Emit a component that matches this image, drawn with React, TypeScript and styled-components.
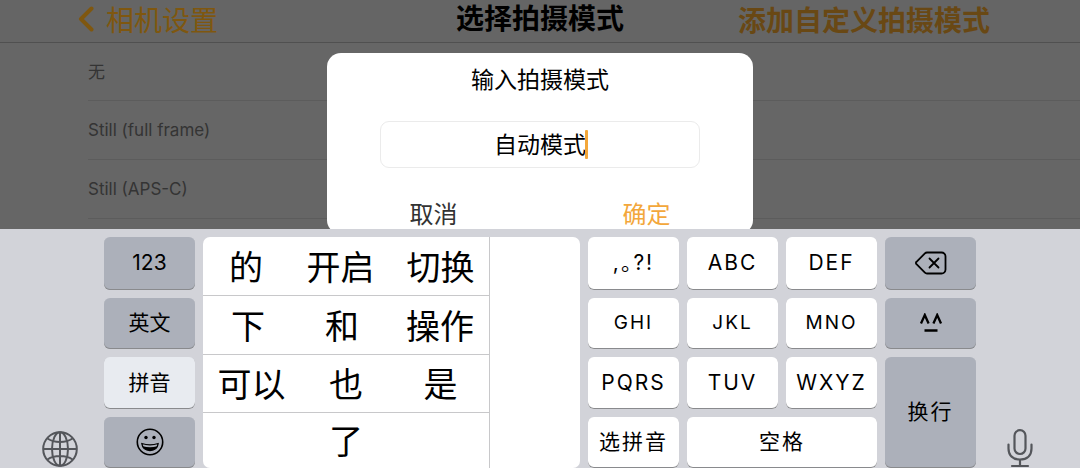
import React from 'react';
import styled, { createGlobalStyle } from 'styled-components';

const GlobalStyle = createGlobalStyle`
  *, *::before, *::after { box-sizing: border-box; }
  body {
    margin: 0;
    background: #d2d3d9;
    font-family: Inter, "Noto Sans CJK SC", sans-serif;
    color: #000;
  }
  button, input { font: inherit; color: inherit; }
  button { border: 0; padding: 0; background: none; cursor: pointer; }
`;

const Page = styled.div`
  display: flex;
  flex-direction: column;
  height: 100vh;
`;

const Screen = styled.main`
  position: relative;
  flex: 1;
  min-height: 0;
  overflow: hidden;
  background: #666;
`;

const Header = styled.header`
  display: grid;
  grid-template-columns: 1fr auto 1fr;
  align-items: center;
  height: 43px;
  padding: 0 90px;
  background: #656565;
  border-bottom: 1px solid #505050;
  font-size: 28px;
  line-height: 40px;
`;

const BackLink = styled.a`
  display: flex;
  align-items: center;
  gap: 12px;
  margin-left: -12px;
  color: #7f570f;
  text-decoration: none;

  svg { margin-bottom: 4px; }
`;

const Title = styled.h1`
  margin: 0;
  padding-bottom: 4px;
  font-size: 28px;
  line-height: 36px;
  font-weight: 600;
`;

const AddButton = styled.button`
  justify-self: end;
  color: #694814;
  font-weight: 600;
`;

const List = styled.ul`
  list-style: none;
  margin: 0;
  padding: 0 0 0 88px;
`;

const Row = styled.li`
  height: 59px;
  border-bottom: 1px solid #5c5c5c;
  color: #343434;
  font-size: 17px;
  line-height: 59px;

  &:first-child { height: 58px; }
`;

const Dialog = styled.form`
  position: absolute;
  top: 53px;
  left: 50%;
  width: 426px;
  transform: translateX(-50%);
  padding: 10px 0 2px;
  border-radius: 14px;
  background: #fff;
  font-size: 23px;
  line-height: 34px;
  text-align: center;
`;

const DialogLabel = styled.label`
  display: block;
`;

const Field = styled.div`
  position: relative;
  margin: 24px 53px 0;
`;

const NameInput = styled.input`
  display: block;
  width: 100%;
  height: 47px;
  padding: 0 0 4px;
  border: 1px solid #ebebeb;
  border-radius: 9px;
  background: #fff;
  text-align: center;
  outline: none;
`;

const Caret = styled.span`
  position: absolute;
  top: 9px;
  left: calc(50% + 45px);
  width: 3px;
  height: 29px;
  border-radius: 1px;
  background: #f3a73b;
`;

const Actions = styled.div`
  display: grid;
  grid-template-columns: 1fr 1fr;
  margin-top: 30px;
`;

const Action = styled.button<{ $primary?: boolean }>`
  color: ${p => (p.$primary ? '#f3a73b' : '#333')};
  font-size: 24px;
  line-height: 34px;
`;

const Keyboard = styled.section`
  display: grid;
  grid-template-columns: 96px 1fr 96px;
  gap: 8px;
  padding-top: 8px;
  background: #d2d3d9;
`;

const Side = styled.div<{ $right?: boolean }>`
  display: flex;
  align-items: flex-end;
  justify-content: ${p => (p.$right ? 'flex-start' : 'flex-end')};
  padding: ${p => (p.$right ? '0 0 0 23px' : '0 18px 1px 0')};
  color: #54565b;
`;

const IconButton = styled.button`
  display: flex;
`;

const Keys = styled.div`
  display: grid;
  grid-template-columns: 91fr 377fr 91fr 91fr 91fr 91fr;
  grid-template-rows: 53px 51px 52px 51px;
  gap: 8px;
`;

const Key = styled.button<{ $tone?: 'dark' | 'pale'; $small?: boolean; $spaced?: boolean; $cols?: number; $rows?: number }>`
  display: flex;
  align-items: center;
  justify-content: center;
  grid-column: span ${p => p.$cols ?? 1};
  grid-row: span ${p => p.$rows ?? 1};
  padding-bottom: 1px;
  border-radius: 6px;
  background: ${p => (p.$tone === 'dark' ? '#acb0ba' : p.$tone === 'pale' ? '#e8ebf0' : '#fff')};
  box-shadow: inset 0 -1px 0 #898a8d;
  font-size: ${p => (p.$small ? 19 : 21)}px;
  letter-spacing: ${p => (p.$spaced ? '2px' : 'normal')};
  line-height: 30px;
`;

const PunctuationKey = styled(Key)`
  font-feature-settings: "halt";
`;

const Candidates = styled.div`
  grid-column: 2;
  grid-row: 1 / span 4;
  display: grid;
  grid-template-columns: 287fr 90fr;
  border-radius: 7px;
  background: #fff;
  overflow: hidden;
`;

const Words = styled.div`
  display: grid;
  grid-template-rows: 59px 59px 58px 55px;
  border-right: 1px solid #c8c8ca;
`;

const WordRow = styled.div<{ $cols: string }>`
  display: grid;
  grid-template-columns: ${p => p.$cols};
  border-bottom: 1px solid #c8c8ca;
  &:last-child { border-bottom: 0; }
`;

const Word = styled.button`
  padding-top: 3px;
  font-size: 34px;
  line-height: 50px;
`;

const candidateRows = [
  { cols: '86fr 103fr 97fr', words: ['的', '开启', '切换'] },
  { cols: '90fr 98fr 98fr', words: ['下', '和', '操作'] },
  { cols: '97fr 92fr 97fr', words: ['可以', '也', '是'] },
  { cols: '1fr', words: ['了'] },
];

const ChevronIcon = () => (
  <svg width="16" height="26" viewBox="0 0 16 26" fill="none" stroke="currentColor" strokeWidth="4" strokeLinecap="round" strokeLinejoin="round">
    <path d="M13.5 2.5 3 13l10.500 10.500" />
  </svg>
);

const GlobeIcon = () => (
  <svg width="36" height="36" viewBox="0 0 36 36" fill="none" stroke="currentColor" strokeWidth="2">
    <circle cx="18" cy="18" r="16.800" />
    <ellipse cx="18" cy="18" rx="8" ry="16.800" />
    <path d="M18 1v34M1 18h34M5.500 7.500c3.500 2.500 7.500 3.500 12.500 3.500s9-1 12.500-3.500M5.500 28.500c3.500-2.500 7.500-3.500 12.500-3.500s9 1 12.500 3.500" />
  </svg>
);

const MicIcon = () => (
  <svg width="26" height="39" viewBox="0 0 26 39" fill="none" stroke="currentColor" strokeWidth="2.200" strokeLinecap="round">
    <rect x="7.500" y="1.200" width="11" height="23.800" rx="5.500" />
    <path d="M1.500 15.500v4c0 7 4.500 11 11.500 11s11.500-4 11.500-11v-4M13 30.500V37M5 37h16" />
  </svg>
);

const SmileIcon = () => (
  <svg width="28" height="28" viewBox="0 0 28 28" fill="none" stroke="#000" strokeWidth="1.6">
    <circle cx="14" cy="14" r="12.700" />
    <circle cx="10" cy="9.500" r="1.700" fill="#000" stroke="none" />
    <circle cx="18" cy="9.500" r="1.700" fill="#000" stroke="none" />
    <path d="M5.800 15.500c5 1.700 11.400 1.700 16.400 0-.6 4.300-3.800 7-8.200 7s-7.600-2.700-8.200-7Z" strokeWidth="1.300" strokeLinejoin="round" />
    <path d="M6.800 18.200c4.500 1.300 9.900 1.300 14.400 0-1.300 2.900-3.900 4.300-7.200 4.300s-5.900-1.400-7.200-4.300Z" fill="#000" stroke="none" />
  </svg>
);

const DeleteIcon = () => (
  <svg width="32" height="24" viewBox="0 0 32 24" fill="none" stroke="#000" strokeWidth="1.800" strokeLinecap="round" strokeLinejoin="round">
    <path d="M12 1.500h14.500a4 4 0 0 1 4 4v13a4 4 0 0 1-4 4H12a3 3 0 0 1-2.100-.9L1.500 13.200a1.500 1.500 0 0 1 0-2.400L9.900 2.400A3 3 0 0 1 12 1.500Z" />
    <path d="m14.500 7.500 9 9M23.500 7.500l-9 9" />
  </svg>
);

const FaceIcon = () => (
  <svg width="24" height="20" viewBox="0 0 24 20" fill="none" stroke="#000" strokeWidth="2.300">
    <path d="M2 10.500 5.800 2 9.600 10.500M14.400 10.500 18.200 2 22 10.500M5.500 17.500h13" />
  </svg>
);

export default function App() {
  return (
    <Page>
      <GlobalStyle />
      <Screen>
        <Header>
          <BackLink href="#settings"><ChevronIcon />相机设置</BackLink>
          <Title>选择拍摄模式</Title>
          <AddButton type="button">添加自定义拍摄模式</AddButton>
        </Header>
        <List>
          <Row>无</Row>
          <Row>Still (full frame)</Row>
          <Row>Still (APS-C)</Row>
        </List>
        <Dialog onSubmit={e => e.preventDefault()}>
          <DialogLabel htmlFor="mode-name">输入拍摄模式</DialogLabel>
          <Field>
            <NameInput id="mode-name" type="text" defaultValue="自动模式" />
            <Caret />
          </Field>
          <Actions>
            <Action type="button">取消</Action>
            <Action type="submit" $primary>确定</Action>
          </Actions>
        </Dialog>
      </Screen>
      <Keyboard>
        <Side><IconButton type="button" aria-label="切换键盘"><GlobeIcon /></IconButton></Side>
        <Keys>
          <Key type="button" $tone="dark">123</Key>
          <Candidates>
            <Words>
              {candidateRows.map(row => (
                <WordRow key={row.words[0]} $cols={row.cols}>
                  {row.words.map(word => <Word key={word} type="button">{word}</Word>)}
                </WordRow>
              ))}
            </Words>
          </Candidates>
          <PunctuationKey type="button" $spaced>,。?!</PunctuationKey>
          <Key type="button" $spaced>ABC</Key>
          <Key type="button" $spaced>DEF</Key>
          <Key type="button" $tone="dark" aria-label="删除"><DeleteIcon /></Key>

          <Key type="button" $tone="dark">英文</Key>
          <Key type="button" $spaced $small>GHI</Key>
          <Key type="button" $spaced $small>JKL</Key>
          <Key type="button" $spaced $small>MNO</Key>
          <Key type="button" $tone="dark" aria-label="颜文字"><FaceIcon /></Key>

          <Key type="button" $tone="pale">拼音</Key>
          <Key type="button" $spaced>PQRS</Key>
          <Key type="button" $spaced>TUV</Key>
          <Key type="button" $spaced>WXYZ</Key>
          <Key type="button" $tone="dark" $spaced $rows={2}>换行</Key>

          <Key type="button" $tone="dark" aria-label="表情"><SmileIcon /></Key>
          <Key type="button" $spaced>选拼音</Key>
          <Key type="button" $spaced $cols={2}>空格</Key>
        </Keys>
        <Side $right><IconButton type="button" aria-label="语音输入"><MicIcon /></IconButton></Side>
      </Keyboard>
    </Page>
  );
}
